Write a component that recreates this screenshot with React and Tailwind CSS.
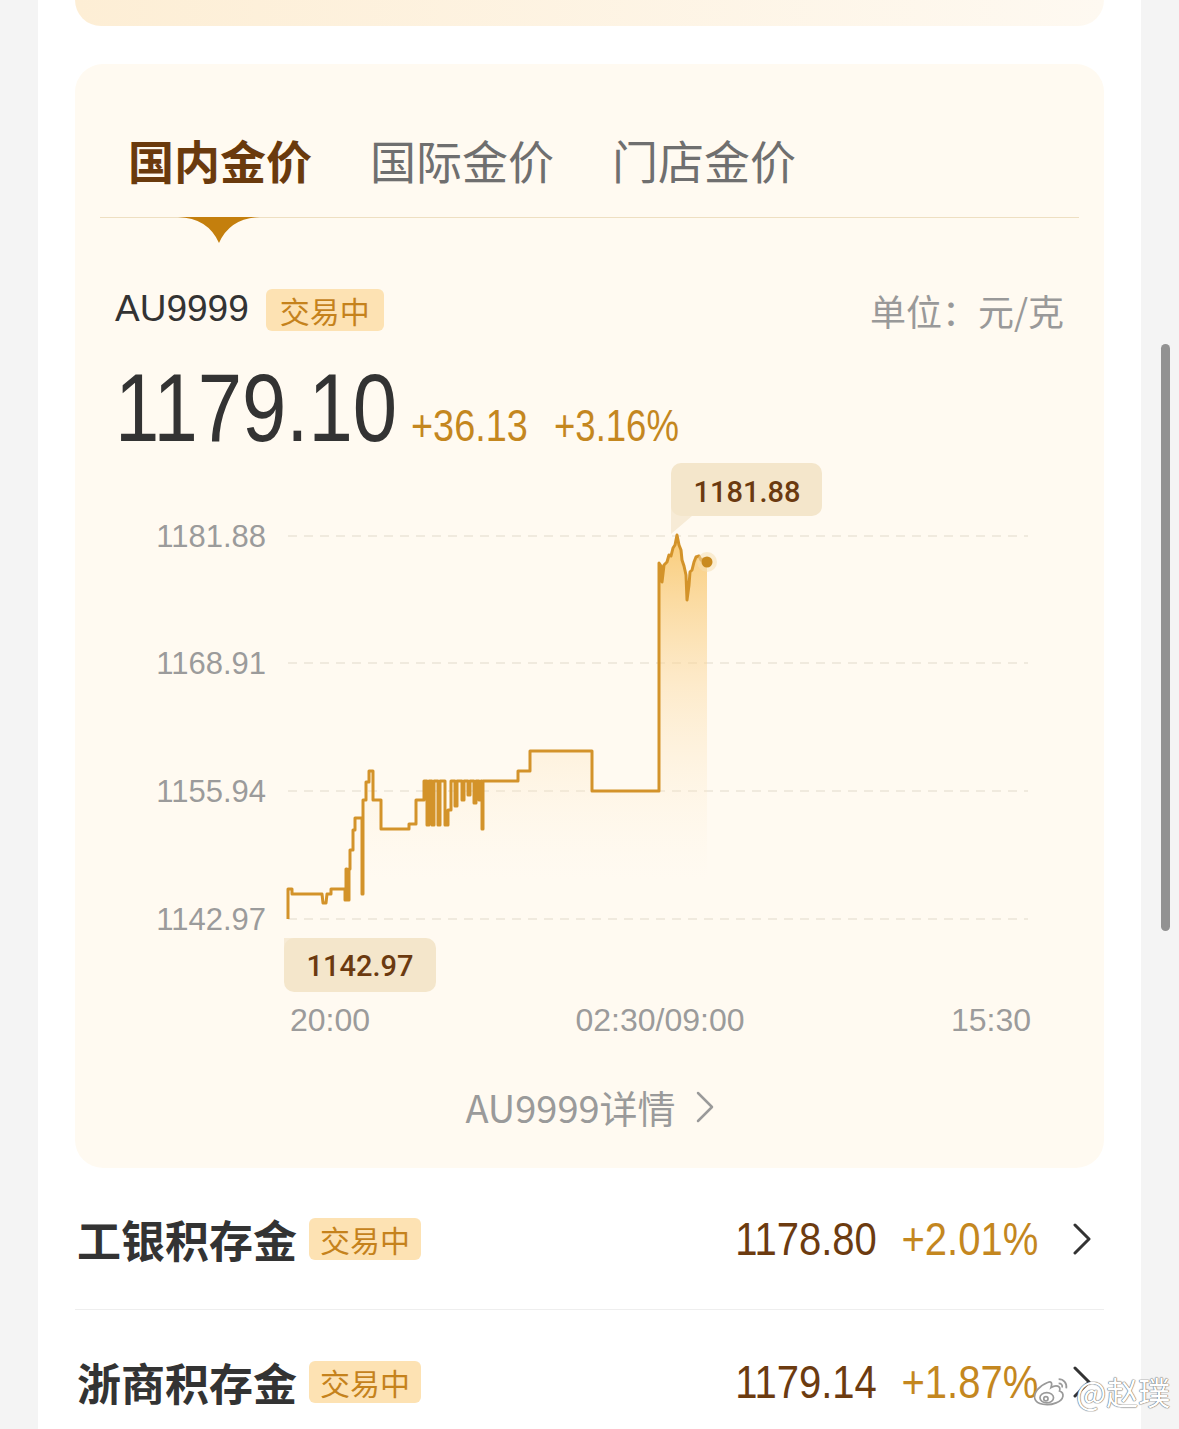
import React from 'react';

const NUM = "font-[family-name:'Liberation_Sans',sans-serif]";

const LINE =
  'M288,919 V889 H292 V894 H322 L323,903 H326 L327,894 H331 V889 H345 V900 H346 V869 H347 V900 H349 V869 H350 V850 H353 V830 H355 V818 H362 V894 H363 V800 H366 V782 H369 V771 H373 V800 H381 V829 H409 V824 H416 V800 H424 V781 H427 V825 H429 V781 H432 V825 H434 V781 H438 V825 H440 V781 H445 V781 V825 H448 V810 H451 V781 H455 V806 H457 V781 H462 V800 H464 V781 H468 V795 H470 V781 H474 V803 H476 V781 H479 V800 H481 V781 H482 V829 H483 V781 H518 V771 H530 V751 H592 V791 H659 V563 L661,566 L662,582 L664,565 L667,562 L669,555 L671,556 L673,548 L675,545 L677,535 L679,545 L681,550 L682,560 L684,566 L686,575 L687,600 L689,585 L690,572 L692,570 L694,562 L696,557 L699,556 L701,560 L704,559 L707,562';

function Chevron({ className, stroke = '#333', width = 3 }) {
  return (
    <svg viewBox="0 0 18 32" className={className} fill="none">
      <path d="M2 2 L16 16 L2 30" stroke={stroke} strokeWidth={width} strokeLinecap="round" strokeLinejoin="round" />
    </svg>
  );
}

function Badge({ className = '' }) {
  return (
    <span className={`flex h-[42px] items-center rounded-[6px] bg-[#fde2b3] text-[30px] leading-none text-[#c5821c] ${className}`}>
      交易中
    </span>
  );
}

function Chart() {
  const grid = [
    { y: 536, label: '1181.88' },
    { y: 663, label: '1168.91' },
    { y: 791, label: '1155.94' },
    { y: 919, label: '1142.97' },
  ];
  return (
    <svg width="1028" height="594" viewBox="75 456 1028 594" className="block">
      <defs>
        <linearGradient id="fill" gradientUnits="userSpaceOnUse" x1="0" y1="535" x2="0" y2="880">
          <stop offset="0" stopColor="#f8c362" stopOpacity="0.85" />
          <stop offset="0.45" stopColor="#fbd9a0" stopOpacity="0.45" />
          <stop offset="1" stopColor="#fdf1dc" stopOpacity="0" />
        </linearGradient>
      </defs>
      {grid.map((g) => (
        <g key={g.label}>
          <line x1="288" x2="1028" y1={g.y} y2={g.y} stroke="#ece5d8" strokeWidth="1.5" strokeDasharray="9 7" />
          <text x="266" y={g.y + 11} textAnchor="end" fontSize="31" fill="#9b9b9b" fontFamily="'Liberation Sans', sans-serif">
            {g.label}
          </text>
        </g>
      ))}
      <path d={`${LINE} V919 H288 Z`} fill="url(#fill)" />
      <path d={LINE} fill="none" stroke="#d3932a" strokeWidth="3" strokeLinejoin="round" />
      <circle cx="707" cy="562" r="10" fill="#f6ddb0" opacity="0.5" />
      <circle cx="707" cy="562" r="5.5" fill="#c98a1f" />

      <polygon points="671,505 671,534 692,516 692,505" fill="#f7ebd6" />
      <rect x="671" y="463" width="151" height="53" rx="10" fill="#f4e6cb" />
      <text x="747" y="502" textAnchor="middle" fontSize="29" fontWeight="500" fill="#6b3a10" fontFamily="Roboto, sans-serif">
        1181.88
      </text>

      <polygon points="284,920 284,950 302,938 284,938" fill="#f7ebd6" />
      <rect x="284" y="938" width="152" height="54" rx="10" fill="#f4e6cb" />
      <text x="360" y="976" textAnchor="middle" fontSize="29" fontWeight="500" fill="#6b3a10" fontFamily="Roboto, sans-serif">
        1142.97
      </text>

      <text x="330" y="1031" textAnchor="middle" fontSize="32" fill="#9b9b9b" fontFamily="'Liberation Sans', sans-serif">20:00</text>
      <text x="660" y="1031" textAnchor="middle" fontSize="32" fill="#9b9b9b" fontFamily="'Liberation Sans', sans-serif">02:30/09:00</text>
      <text x="991" y="1031" textAnchor="middle" fontSize="32" fill="#9b9b9b" fontFamily="'Liberation Sans', sans-serif">15:30</text>
    </svg>
  );
}

function Row({ name, price, pct, className = '' }) {
  return (
    <div className={`flex items-center ${className}`}>
      <span className="pl-[2px] text-[44px] font-bold leading-none text-[#333]">{name}</span>
      <Badge className="ml-[12px] px-[11px]" />
      <span className={`ml-auto origin-right scale-x-[0.87] text-[46px] leading-none text-[#6c3b10] ${NUM}`}>{price}</span>
      <span className={`ml-[4px] origin-right scale-x-[0.87] text-[46px] leading-none text-[#c4871f] ${NUM}`}>{pct}</span>
      <Chevron className="ml-[35px] mr-[13px] h-[32px] w-[18px]" />
    </div>
  );
}

export default function App() {
  return (
    <div className="relative min-h-[1429px] w-full overflow-hidden bg-[#f4f4f4] font-[family-name:'Noto_Sans_CJK_SC',sans-serif]">
      <div className="ml-[38px] min-h-[1429px] w-[1103px] bg-white px-[37px]">
        <div className="h-[26px] rounded-b-[26px] bg-linear-to-r from-[#fdeed5] to-[#fef9f1]" />

        <div className="mt-[38px] rounded-[28px] bg-[#fffaf1]">
          <div className="relative mx-[25px] flex h-[154px] items-end gap-[58px] border-b border-[#eedfc2] pb-[35px] pl-[28px]">
            <span className="text-[46px] font-bold leading-[46px] text-[#6a3a0d]">国内金价</span>
            <span className="text-[46px] leading-[46px] text-[#6f6f6f]">国际金价</span>
            <span className="text-[46px] leading-[46px] text-[#6f6f6f]">门店金价</span>
            <svg viewBox="0 0 82 26" className="absolute left-[78px] top-full h-[26px] w-[82px]">
              <path d="M0,0 Q30,1 41,26 Q52,1 82,0 Z" fill="#c47f0d" />
            </svg>
          </div>

          <div className="mt-[71px] flex items-center justify-between px-[40px]">
            <div className="flex items-center">
              <span className={`-mt-[4px] text-[37px] leading-none text-[#333] ${NUM}`}>AU9999</span>
              <Badge className="ml-[17px] px-[14px]" />
            </div>
            <span className="text-[36px] leading-none text-[#999]">单位：元/克</span>
          </div>

          <div className="mt-[29px] flex h-[96px] items-baseline px-[40px]">
            <span className={`origin-left scale-x-[0.83] text-[96px] leading-[96px] text-[#333] ${NUM}`}>1179.10</span>
            <span className={`-ml-[44px] origin-left scale-x-[0.86] text-[44px] leading-none text-[#c4871f] ${NUM}`}>+36.13</span>
            <span className={`ml-[7px] origin-left scale-x-[0.83] text-[44px] leading-none text-[#c4871f] ${NUM}`}>+3.16%</span>
          </div>

          <Chart />

          <div className="mt-[38px] flex items-center justify-center pb-[42px]">
            <span className="text-[38px] leading-[38px] text-[#9a9a9a]">AU9999详情</span>
            <Chevron className="ml-[20px] h-[36px] w-[18px]" stroke="#9a9a9a" width={2.5} />
          </div>
        </div>

        <Row name="工银积存金" price="1178.80" pct="+2.01%" className="h-[142px] border-b border-[#eeeeee]" />
        <Row name="浙商积存金" price="1179.14" pct="+1.87%" className="h-[144px]" />
      </div>

      <div className="absolute left-[1161px] top-[344px] h-[587px] w-[9px] rounded-full bg-[#929292]" />

      <div className="absolute left-[1030px] top-[1374px] flex items-center gap-[4px]">
        <svg viewBox="0 0 48 40" className="h-[34px] w-[42px]" fill="none" stroke="#9a9a9a" strokeWidth="2">
          <path d="M20 10 C10 14 3 22 5 29 C7 36 20 38 30 34 C40 30 40 22 34 20 C36 14 30 12 24 16 C26 10 24 8 20 10 Z" fill="#fff" />
          <ellipse cx="19" cy="28" rx="8" ry="6" fill="#fff" />
          <circle cx="18" cy="29" r="2.5" />
          <path d="M33 6 C39 6 43 11 42 17" />
          <path d="M33 11 C36 11 38 13 37 16" />
        </svg>
        <span className="text-[32px] leading-none text-white [text-shadow:0_0_1px_#6f6f6f,0_0_1px_#6f6f6f,0_0_1px_#6f6f6f]">@赵璞</span>
      </div>
    </div>
  );
}
